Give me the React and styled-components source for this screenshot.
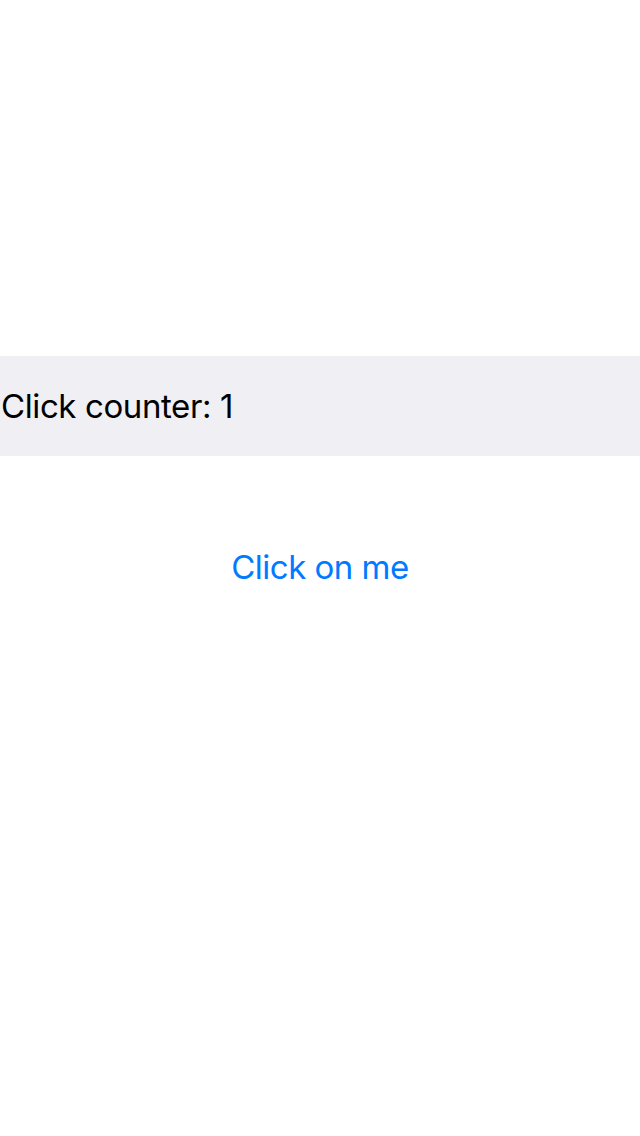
import React from "react";
import styled, { createGlobalStyle } from "styled-components";

const Global = createGlobalStyle`
  html, body { margin: 0; padding: 0; background: #ffffff; }
  body { font-family: Inter, "Noto Sans", sans-serif; -webkit-font-smoothing: antialiased; }
`;

const Screen = styled.div`
  width: 640px;
  height: 1136px;
  display: flex;
  flex-direction: column;
  padding-top: 356px;
  box-sizing: border-box;
`;

const CounterBar = styled.div`
  height: 100px;
  background: #efeff4;
  display: flex;
  align-items: center;
  padding-left: 1px;
  font-size: 33px;
  color: #000000;
  letter-spacing: -0.4px;
`;

const ButtonRow = styled.div`
  display: flex;
  justify-content: center;
  padding-top: 88px;
`;

const LinkButton = styled.button`
  border: none;
  background: transparent;
  padding: 0;
  font-family: inherit;
  font-size: 33px;
  color: #007aff;
  letter-spacing: -0.5px;
  line-height: 46px;
  cursor: pointer;
`;

export default function App() {
  const [count, setCount] = React.useState(1);
  return (
    <>
      <Global />
      <Screen>
        <CounterBar>Click counter: {count}</CounterBar>
        <ButtonRow>
          <LinkButton onClick={() => setCount((c) => c + 1)}>Click on me</LinkButton>
        </ButtonRow>
      </Screen>
    </>
  );
}
